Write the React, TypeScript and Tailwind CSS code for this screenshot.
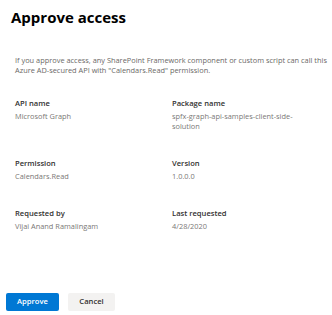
const rows = [
  [
    { label: 'API name', value: 'Microsoft Graph' },
    { label: 'Package name', value: 'spfx-graph-api-samples-client-side-solution' },
  ],
  [
    { label: 'Permission', value: 'Calendars.Read' },
    { label: 'Version', value: '1.0.0.0' },
  ],
  [
    { label: 'Requested by', value: 'Vijai Anand Ramalingam' },
    { label: 'Last requested', value: '4/28/2020' },
  ],
];

const App = () => {
  return (
    <div
      className="w-[332px] h-[315px] bg-white flex flex-col overflow-hidden"
      style={{ fontFamily: '"Open Sans", "Noto Sans", sans-serif' }}
    >
      <h1 className="pl-[11px] pt-[7px] text-[15px] leading-[20px] font-bold text-black">Approve access</h1>

      <p className="pl-[15px] mt-[28px] text-[7.4px] leading-[10px] text-[#6b6967]">
        If you approve access, any SharePoint Framework component or custom script can call this
        <br />
        Azure AD-secured API with "Calendars.Read" permission.
      </p>

      <div className="pl-[15px] mt-[23px] flex flex-col gap-[27px]">
        {rows.map((row, i) => (
          <div key={i} className="grid grid-cols-[157px_128px]">
            {row.map((item) => (
              <div key={item.label} className="flex flex-col">
                <span className="text-[7.6px] leading-[10px] font-semibold text-[#323130]">{item.label}</span>
                <span className="mt-[3px] text-[7.4px] leading-[10px] text-[#7a7876] break-words">
                  {item.value}
                </span>
              </div>
            ))}
          </div>
        ))}
      </div>

      <div className="mt-auto mb-[4px] pl-[6px] flex gap-[9px]">
        <button className="w-[53px] h-[18px] rounded-[2px] bg-[#0078d4] text-white text-[7.6px] font-semibold">
          Approve
        </button>
        <button className="w-[47px] h-[18px] rounded-[2px] bg-[#f3f2f1] text-[#323130] text-[7.6px] font-semibold">
          Cancel
        </button>
      </div>
    </div>
  );
};

export default App;
